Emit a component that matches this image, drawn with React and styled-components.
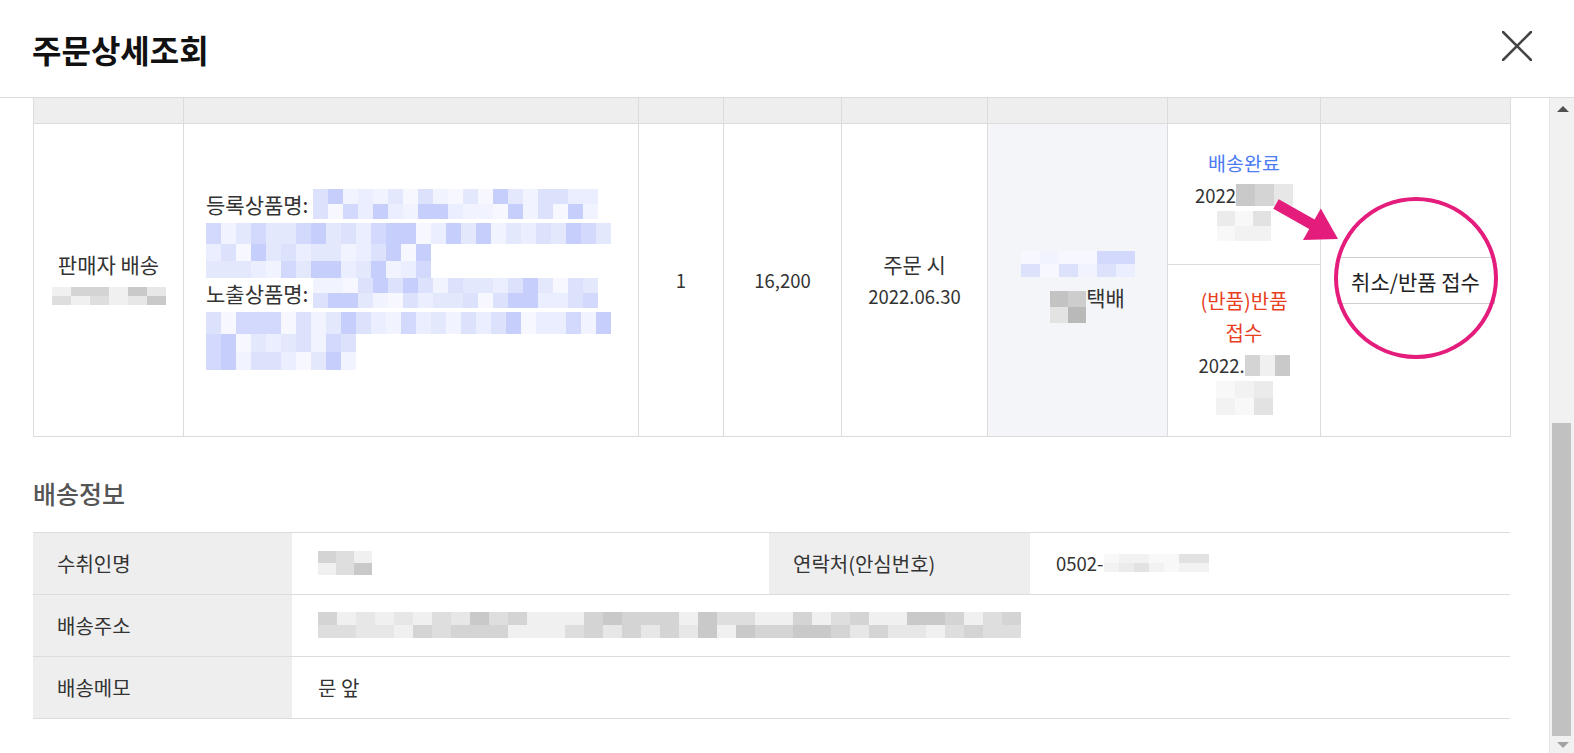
import React from 'react'
import styled, { createGlobalStyle } from 'styled-components'

const GlobalStyle = createGlobalStyle`
  html, body { margin: 0; padding: 0; background: #fff; }
  body {
    font-family: "Noto Sans CJK KR", "Noto Sans", sans-serif;
    color: #333;
  }
  * { box-sizing: border-box; }
`

// blurred (redacted) bits of the screenshot are drawn as a mosaic of tiles
const tones = {
    blue: ['#c6cefb', '#d3d9fc', '#dde2fc', '#e4e8fd', '#ebeefe', '#f1f3fe', '#f7f8ff'],
    gray: ['#c9c9c9', '#d4d4d4', '#dedede', '#e7e7e7', '#f0f0f0'],
    dark: ['#b9b9b9', '#c3c3c3', '#cdcdcd', '#e3e3e3'],
    light: ['#e2e2e2', '#ebebeb', '#f2f2f2', '#f8f8f8'],
}

const rand = (seed) => {
    let t = seed * 9973
    return () => {
        t = (t + 0x6d2b79f5) | 0
        let r = Math.imul(t ^ (t >>> 15), 1 | t)
        r ^= r + Math.imul(r ^ (r >>> 7), 61 | r)
        return ((r ^ (r >>> 14)) >>> 0) / 4294967296
    }
}

const Tiles = styled.span`
    display: inline-grid;
    grid-template-columns: repeat(${p => p.$cols}, ${p => p.$cw}px);
    grid-auto-rows: ${p => p.$ch}px;
    vertical-align: middle;
    margin: ${p => p.$m || '0'};
    flex-shrink: 0;
`

const Mosaic = ({ cols, rows, cw, ch, tone = 'gray', seed = 1, m }) => {
    const next = rand(seed)
    const pal = tones[tone]
    const cells = Array.from({ length: cols * rows }, () => pal[Math.floor(next() * pal.length)])
    return (
        <Tiles $cols={cols} $cw={cw} $ch={ch} $m={m}>
            {cells.map((c, i) => <span key={i} style={{ background: c }} />)}
        </Tiles>
    )
}

const Modal = styled.div`
    width: 1574px;
    height: 753px;
    display: flex;
    flex-direction: column;
    background: #fff;
    overflow: hidden;
`
const Header = styled.header`
    height: 98px;
    flex-shrink: 0;
    display: flex;
    align-items: center;
    justify-content: space-between;
    padding: 0 42px 0 32px;
    border-bottom: 1px solid #dcdcdc;
`
const Title = styled.h1`
    margin: 0;
    font-size: 32px;
    font-weight: 700;
    color: #111;
`
const Close = styled.button`
    width: 30px;
    height: 30px;
    padding: 0;
    margin-bottom: 6px;
    border: 0;
    background: none;
    display: grid;
    place-items: center;
`
const Body = styled.div`
    flex: 1;
    min-height: 0;
    display: flex;
`
const Content = styled.div`
    flex: 1;
    padding: 0 38px 0 33px;
`
const OrderTable = styled.table`
    width: 1477px;
    border-collapse: collapse;
    table-layout: fixed;
    font-size: 21px;
    color: #333;
    th, td { border: 1px solid #dcdcdc; }
    tr:first-child th { border-top: 0; }
`
const Th = styled.th`
    height: 25px;
    padding: 0;
    background: #eeeeee;
`
const Td = styled.td`
    height: 313px;
    padding: ${p => p.$pad || '0'};
    text-align: ${p => p.$align || 'center'};
    vertical-align: middle;
    line-height: 32px;
    background: ${p => p.$bg || '#fff'};
    position: relative;
`
const Num = styled.span`
    font-size: 18.5px;
`
const Line = styled.div`
    display: flex;
    justify-content: ${p => p.$left ? 'flex-start' : 'center'};
    align-items: ${p => p.$top ? 'flex-start' : 'center'};
    height: ${p => p.$h ? p.$h + 'px' : 'auto'};
    color: ${p => p.$color || 'inherit'};
    font-size: ${p => p.$size ? p.$size + 'px' : 'inherit'};
`
const Label = styled.span`
    line-height: 30px;
    margin-right: 5px;
    flex-shrink: 0;
`
const Stack = styled.div`
    display: flex;
    flex-direction: column;
    height: 100%;
`
const SubCell = styled.div`
    height: ${p => p.$h}px;
    display: flex;
    flex-direction: column;
    justify-content: center;
    border-top: ${p => p.$split ? '1px solid #dcdcdc' : '0'};
`
const ActionButton = styled.button`
    width: 158px;
    height: 47px;
    padding: 0;
    background: #fff;
    border: 1px solid #cfcfcf;
    font-family: inherit;
    font-size: 21px;
    color: #222;
    margin-top: 2px;
`
const Ring = styled.div`
    position: absolute;
    left: 13px;
    top: 73px;
    width: 164px;
    height: 162px;
    border: 4px solid #e41c7c;
    border-radius: 50%;
    pointer-events: none;
`
const Pointer = styled.svg`
    position: absolute;
    left: -60px;
    top: 64px;
    overflow: visible;
    pointer-events: none;
`
const SectionTitle = styled.h2`
    margin: 42px 0 0;
    font-size: 25px;
    line-height: 28px;
    font-weight: 500;
    color: #555;
`
const InfoTable = styled.div`
    margin-top: 25px;
    width: 1477px;
    display: grid;
    grid-template-columns: 259px 477px 261px 480px;
    border-top: 1px solid #dcdcdc;
    font-size: 20px;
`
const InfoCell = styled.div`
    height: 62px;
    display: flex;
    align-items: center;
    padding-left: ${p => p.$label ? 24 : 26}px;
    background: ${p => p.$label ? '#eeeeee' : '#fff'};
    border-bottom: 1px solid #dcdcdc;
    grid-column: ${p => p.$span || 'auto'};
    color: #333;
`
const Scrollbar = styled.div`
    width: 26px;
    flex-shrink: 0;
    background: #f1f1f1;
    border-left: 1px solid #e6e6e6;
    display: flex;
    flex-direction: column;
`
const ArrowBox = styled.div`
    height: ${p => p.$h}px;
    display: grid;
    place-items: center;
    &::after {
        content: '';
        border-left: 6px solid transparent;
        border-right: 6px solid transparent;
        ${p => p.$down
            ? 'border-top: 6px solid #a3a3a3;'
            : 'border-bottom: 6px solid #505050;'}
    }
`
const Track = styled.div`
    flex: 1;
    display: flex;
    flex-direction: column;
    justify-content: flex-end;
`
const Thumb = styled.div`
    height: 313px;
    width: 19px;
    margin-left: 2px;
    background: #c1c1c1;
`

const App = () => {
    return (
        <Modal>
            <GlobalStyle />
            <Header>
                <Title>주문상세조회</Title>
                <Close aria-label="닫기">
                    <svg width="30" height="30" viewBox="0 0 30 30">
                        <path d="M1 1 L29 29 M29 1 L1 29" stroke="#444" strokeWidth="2.6" strokeLinecap="round" />
                    </svg>
                </Close>
            </Header>
            <Body>
                <Content>
                    <OrderTable>
                        <colgroup>
                            {[150, 455, 85, 118, 146, 180, 153, 190].map((w, i) => <col key={i} style={{ width: w }} />)}
                        </colgroup>
                        <thead>
                            <tr>{Array.from({ length: 8 }, (_, i) => <Th key={i} />)}</tr>
                        </thead>
                        <tbody>
                            <tr>
                                <Td>
                                    <Line>판매자 배송</Line>
                                    <Line $h={32}><Mosaic cols={6} rows={2} cw={19} ch={9} seed={3} tone="gray" /></Line>
                                </Td>
                                <Td $align="left" $pad="0 0 0 22px">
                                    <Line $left $top>
                                        <Label>등록상품명:</Label>
                                        <Mosaic cols={19} rows={2} cw={15} ch={15} seed={11} tone="blue" />
                                    </Line>
                                    <Line $left><Mosaic cols={27} rows={1} cw={15} ch={21} seed={12} tone="blue" m="4px 0 0" /></Line>
                                    <Line $left><Mosaic cols={15} rows={2} cw={15} ch={17} seed={13} tone="blue" /></Line>
                                    <Line $left $top>
                                        <Label>노출상품명:</Label>
                                        <Mosaic cols={19} rows={2} cw={15} ch={15} seed={14} tone="blue" />
                                    </Line>
                                    <Line $left><Mosaic cols={27} rows={1} cw={15} ch={22} seed={15} tone="blue" m="4px 0 0" /></Line>
                                    <Line $left><Mosaic cols={10} rows={2} cw={15} ch={18} seed={16} tone="blue" /></Line>
                                </Td>
                                <Td><Num>1</Num></Td>
                                <Td><Num>16,200</Num></Td>
                                <Td>
                                    <Line>주문 시</Line>
                                    <Line><Num>2022.06.30</Num></Line>
                                </Td>
                                <Td $bg="#f3f5f9">
                                    <Line><Mosaic cols={6} rows={2} cw={19} ch={13} seed={21} tone="blue" m="4px 0 4px" /></Line>
                                    <Line $h={32} $top>
                                        <Mosaic cols={2} rows={2} cw={18} ch={16} seed={22} tone="dark" m="10px 0 0 20px" />
                                        <span>택배</span>
                                    </Line>
                                </Td>
                                <Td>
                                    <Stack>
                                        <SubCell $h={140}>
                                            <Line $color="#4b7cf3" $size={19.5}>배송완료</Line>
                                            <Line><Num>2022</Num><Mosaic cols={3} rows={1} cw={19} ch={22} seed={31} tone="gray" /></Line>
                                            <Line><Mosaic cols={3} rows={2} cw={18} ch={15} seed={32} tone="light" /></Line>
                                        </SubCell>
                                        <SubCell $h={172} $split>
                                            <Line $color="#e8401f" $size={20}>(반품)반품</Line>
                                            <Line $color="#e8401f" $size={20}>접수</Line>
                                            <Line><Num>2022.</Num><Mosaic cols={3} rows={1} cw={15} ch={21} seed={33} tone="gray" /></Line>
                                            <Line><Mosaic cols={3} rows={2} cw={19} ch={17} seed={34} tone="light" /></Line>
                                        </SubCell>
                                    </Stack>
                                </Td>
                                <Td>
                                    <ActionButton>취소/반품 접수</ActionButton>
                                    <Ring />
                                    <Pointer width="90" height="70" viewBox="0 0 90 70">
                                        <polygon
                                            points="17.7,11.2 53.6,31.4 59.8,20.5 77,51 42,52 48.2,41 12.3,20.8"
                                            fill="#e41c7c"
                                        />
                                    </Pointer>
                                </Td>
                            </tr>
                        </tbody>
                    </OrderTable>

                    <SectionTitle>배송정보</SectionTitle>
                    <InfoTable>
                        <InfoCell $label>수취인명</InfoCell>
                        <InfoCell><Mosaic cols={3} rows={2} cw={18} ch={12} seed={41} tone="gray" /></InfoCell>
                        <InfoCell $label>연락처(안심번호)</InfoCell>
                        <InfoCell><Num>0502-</Num><Mosaic cols={7} rows={2} cw={15} ch={9} seed={42} tone="light" /></InfoCell>
                        <InfoCell $label>배송주소</InfoCell>
                        <InfoCell $span="2 / 5"><Mosaic cols={37} rows={2} cw={19} ch={13} seed={43} tone="gray" /></InfoCell>
                        <InfoCell $label>배송메모</InfoCell>
                        <InfoCell $span="2 / 5">문 앞</InfoCell>
                    </InfoTable>
                </Content>
                <Scrollbar>
                    <ArrowBox $h={21} />
                    <Track><Thumb /></Track>
                    <ArrowBox $h={17} $down />
                </Scrollbar>
            </Body>
        </Modal>
    )
}

export default App
